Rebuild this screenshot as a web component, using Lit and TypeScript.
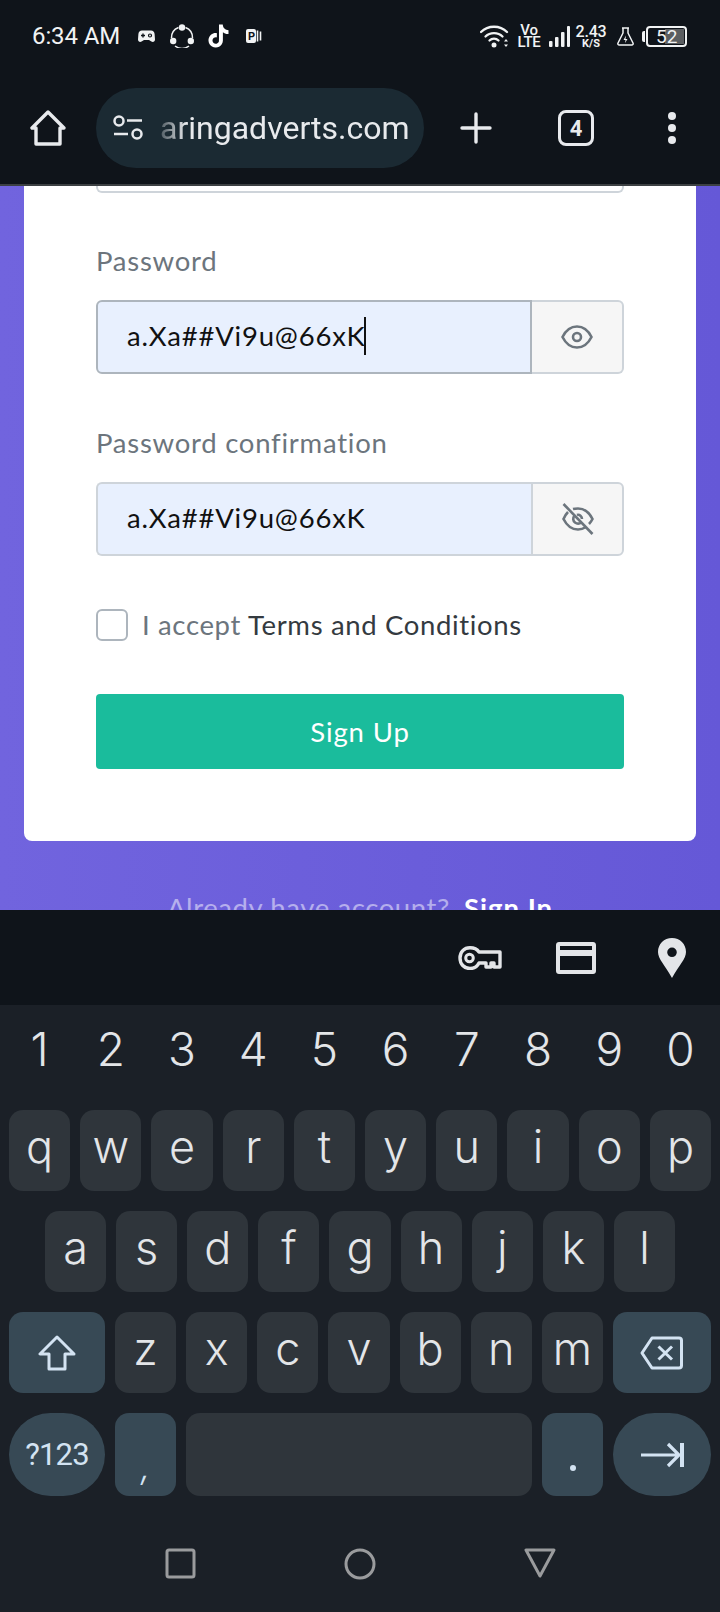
import { LitElement, html, css } from "lit";
import { customElement } from "lit/decorators.js";

const eye = html`<svg class="eye" viewBox="0 0 32 24"><path d="M1.500 12C5 5 10 1.500 16 1.500S27 5 30.500 12C27 19 22 22.500 16 22.500S5 19 1.500 12Z"/><circle cx="16" cy="12" r="4"/></svg>`;
const eyeOff = html`<svg class="eye off" viewBox="0 0 32 32"><path d="M6 9C4 11 2.800 13 1.500 16C5 23 10 26.500 16 26.500C19 26.500 21.500 25.600 24 24M11 6C12.800 5.500 14.300 5.500 16 5.500C22 5.500 27 9 30.500 16C29.500 18 28.500 19.500 27 21"/><path d="M1.500 1L30.500 31"/><path d="M12.500 12.500C10.500 15 11 18 13 19.500C15 21 17.500 20.800 19.500 19.500M15 12C17.500 11 20 13.500 20 16"/></svg>`;

@customElement("app-root")
export class AppRoot extends LitElement {
  static styles = css`
    :host { display: block; width: 720px; height: 1612px; overflow: hidden; background: #0f141a; font-family: "Roboto", sans-serif; }
    * { box-sizing: border-box; }
    svg { display: block; flex: none; }
    .status { height: 72px; display: flex; align-items: center; justify-content: space-between; padding: 0 33px 0 32px; color: #f1f3f4; }
    .status-group { display: flex; align-items: center; }
    .time { width: 86px; font-size: 24px; white-space: nowrap; margin-right: 20px; letter-spacing: -0.1px; }
    .mi-game { margin-right: 15px; }
    .mi-share { margin-right: 13px; }
    .mi-tiktok { margin-right: 16px; }
    .si-wifi, .si-volte { margin-right: 10px; }
    .si-signal { margin-right: 7px; }
    .si-speed { margin-right: 12px; }
    .si-flask { margin-right: 8px; }
    .volte { width: 20px; display: flex; flex-direction: column; align-items: center; font-size: 15px; line-height: 12px; font-weight: 500; letter-spacing: -0.3px; }
    .speed { width: 28px; display: flex; flex-direction: column; align-items: center; }
    .speed b { font-size: 16px; line-height: 14px; font-weight: 500; letter-spacing: -0.2px; }
    .speed i { font-style: normal; font-size: 11px; line-height: 9px; font-weight: 700; }
    .battery-wrap { display: flex; align-items: center; gap: 1px; }
    .nub { width: 3px; height: 11px; background: #f1f3f4; border-radius: 2px 0 0 2px; }
    .battery { position: relative; width: 41px; height: 21px; border: 2px solid #f1f3f4; border-radius: 4px; display: flex; align-items: center; padding-left: 8px; font-size: 19px; line-height: 17px; }
    .battery::before { content: ""; position: absolute; left: 17px; right: 1px; top: 1px; bottom: 1px; background: #5b5e61; }
    .battery span { position: relative; }

    .toolbar { height: 112px; display: flex; align-items: center; padding-left: 30px; }
    .home { margin-right: 30px; }
    .pill { width: 328px; height: 80px; border-radius: 40px; background: #1b2a33; display: flex; align-items: center; padding-left: 17px; margin-right: 36px; }
    .url { margin-left: 17px; width: 252px; overflow: hidden; font-size: 32px; line-height: 40px; color: #e8eaed; white-space: nowrap; -webkit-mask-image: linear-gradient(to right, rgba(0,0,0,0.25), #000 26px); mask-image: linear-gradient(to right, rgba(0,0,0,0.25), #000 26px); }
    .plus { margin-right: 66px; }
    .tabs { width: 36px; height: 36px; border: 3.500px solid #e8eaed; border-radius: 8px; display: flex; align-items: center; justify-content: center; font-size: 22px; font-weight: 700; color: #e8eaed; margin-right: 74px; }
    .divider { height: 2px; background: #3c4043; }

    .web { height: 724px; overflow: hidden; background: linear-gradient(to right, #7164de, #6558d7); font-family: "Lato", sans-serif; font-size: 27.500px; line-height: 38px; }
    .card { margin: 0 24px; background: #fff; border-radius: 0 0 8px 8px; padding: 0 72px 72px; }
    .remnant { height: 7px; border: 2px solid #ced4da; border-top: 0; border-radius: 0 0 6px 6px; margin-bottom: 50px; }
    .label { color: #6c757d; margin-top: -1px; margin-bottom: 20px; letter-spacing: 0.75px; }
    .group { display: flex; height: 74px; margin-bottom: 51px; }
    .group.last { margin-bottom: 53px; }
    .field { flex: 1; background: #e8f0fe; border: 2px solid #ced4da; border-right: 0; border-radius: 6px 0 0 6px; padding-left: 29px; padding-bottom: 3px; display: flex; align-items: center; color: #111; letter-spacing: 0.8px; }
    .focus .field { border: 2px solid #adb5bd; }
    .caret { width: 2px; height: 38px; background: #111; margin-left: -2px; }
    .addon { width: 92px; background: #f6f6f6; border: 2px solid #ced4da; border-left: 2px solid #ced4da; border-radius: 0 6px 6px 0; display: flex; align-items: center; justify-content: center; }
    .focus .addon { border-left: 0; }
    .group:not(.focus) .addon { width: 93px; }
    .eye { width: 32px; height: 24px; fill: none; stroke: #6c757d; stroke-width: 2.600; }
    .eye.off { height: 32px; stroke-width: 2.600px; }
    .accept { display: flex; align-items: center; margin-bottom: 53px; height: 32px; color: #6c757d; letter-spacing: 0.65px; }
    .check { width: 32px; height: 32px; border: 2px solid #adb5bd; border-radius: 6px; margin-right: 14px; }
    .accept b { font-weight: 400; color: #343a40; margin-left: 7px; }
    .signup { height: 75px; background: #1abc9c; border-radius: 4px; color: #fff; display: flex; align-items: center; justify-content: center; letter-spacing: 0.9px; }
    .already { margin-top: 48px; text-align: center; color: rgba(255,255,255,0.5); letter-spacing: 0.6px; }
    .already b { color: #fff; margin-left: 14px; font-weight: 700; letter-spacing: 1px; }

    .accessory { height: 95px; display: flex; align-items: center; justify-content: flex-end; padding-right: 34px; }
    .ac-key { margin-right: 54px; }
    .ac-card { margin-right: 62px; }

    .keyboard { height: 607px; background: #1b2027; padding: 0 9px; color: #e3e5e8; font-family: "Inter", "Roboto", sans-serif; }
    .nums { height: 88px; margin-bottom: 17px; display: flex; gap: 10px; align-items: center; font-size: 46px; font-weight: 350; }
    .nums span { flex: 1 1 0; text-align: center; line-height: 1; }
    .row { display: flex; gap: 10px; height: 81px; margin-bottom: 20px; }
    .row.inset { padding: 0 36px; }
    .row.bottom { height: 83px; margin-bottom: 0; }
    .key { flex: 1 1 0; border-radius: 14px; background: #2f353b; display: flex; align-items: center; justify-content: center; font-size: 45px; font-weight: 350; line-height: 1; padding-bottom: 8px; }
    .key.special { background: #374955; color: #d3e3f2; padding-bottom: 0; }
    .key.shift { flex: 0 0 96px; }
    .key.del { flex: 0 0 98px; }
    .key.pad { flex: 0 0 61px; }
    .key.round { flex: 0 0 96px; border-radius: 42px; font-family: "Roboto", sans-serif; font-size: 31px; font-weight: 400; letter-spacing: -0.8px; }
    .key.round.enter { flex: 0 0 98px; }
    .key.comma { font-size: 36px; padding-top: 22px; font-style: italic; }
    .dot { margin-top: 26px; }
    .nav { height: 116px; display: flex; justify-content: space-between; align-items: center; padding: 20px 155px 0; }
    .nav svg { width: 32px; height: 32px; fill: none; stroke: #9a9b9d; stroke-width: 3; stroke-linejoin: round; }
  `;

  private letters(s: string) {
    return [...s].map((c) => html`<div class="key">${c}</div>`);
  }

  render() {
    return html`
      <div class="status">
        <div class="status-group">
          <span class="time">6:34 AM</span>
          <svg class="mi-game" width="17" height="13" viewBox="0 0 17 13"><path fill="#f1f3f4" d="M4 .5h9c2.200 0 3.300 1.500 3.600 3.500l.4 5.500c0 2-2 3.200-3.600 2L11 10H6L3.600 11.500C2 12.700 0 11.500 0 9.500L.4 4C.7 2 1.800.5 4 .5Z"/><path stroke="#0f141a" stroke-width="1.400" d="M3 5.500h4M5 3.500v4"/><circle cx="12" cy="5.500" r="1.500" fill="none" stroke="#0f141a" stroke-width="1.200"/></svg>
          <svg class="mi-share" width="24" height="24" viewBox="0 0 24 24"><g fill="none" stroke="#f1f3f4" stroke-width="1.500"><path d="M8.500 3.500A11 11 0 0 0 1.500 14"/><path d="M15.500 3.500A11 11 0 0 1 22.500 14"/><path d="M5 22A12 12 0 0 0 19 22"/></g><g fill="#f1f3f4"><circle cx="12" cy="3.500" r="3.200"/><circle cx="3.200" cy="17" r="3.200"/><circle cx="20.800" cy="17" r="3.200"/></g></svg>
          <svg class="mi-tiktok" width="23" height="24" viewBox="0 0 24 24"><path fill="#fff" d="M12.525.02c1.310-.02 2.610-.01 3.910-.02.08 1.530.63 3.090 1.750 4.170 1.120 1.110 2.700 1.620 4.240 1.790v4.030c-1.440-.05-2.890-.35-4.200-.97-.57-.26-1.100-.59-1.620-.93-.01 2.920.01 5.840-.02 8.750-.08 1.400-.54 2.790-1.350 3.940-1.310 1.920-3.580 3.170-5.910 3.210-1.430.08-2.860-.31-4.080-1.030-2.020-1.190-3.440-3.370-3.650-5.710-.02-.5-.03-1-.01-1.490.18-1.900 1.120-3.720 2.580-4.960 1.660-1.440 3.980-2.130 6.150-1.720.02 1.480-.04 2.960-.04 4.440-.99-.32-2.150-.23-3.020.37-.63.41-1.110 1.040-1.360 1.750-.21.51-.15 1.070-.14 1.610.24 1.640 1.820 3.020 3.500 2.870 1.120-.01 2.190-.66 2.770-1.610.19-.33.4-.67.41-1.060.1-1.790.06-3.570.07-5.360.01-4.030-.01-8.050.02-12.070z"/></svg>
          <svg width="16" height="14" viewBox="0 0 16 14"><rect x="0" y="0" width="10" height="14" rx="2" fill="#f1f3f4"/><text x="2" y="11" font-size="11" font-weight="700" font-family="Roboto" fill="#0f141a">P</text><path d="M11.500 1.500v11M14.500 2.500v9" stroke="#f1f3f4" stroke-width="1.600"/></svg>
        </div>
        <div class="status-group">
          <svg class="si-wifi" width="29" height="24" viewBox="0 0 29 24"><g fill="none" stroke="#f1f3f4" stroke-width="2.300" stroke-linecap="round"><path d="M1 8C8 1 20 1 27 8"/><path d="M5.500 12.500C10 8 18 8 22.500 12.500"/><path d="M9.500 16.500C12 14 16 14 18.500 16.500"/></g><circle cx="14" cy="21" r="2.500" fill="#f1f3f4"/><path fill="#f1f3f4" d="M26 15l2 2.500h-4zM26 23l-2-2.500h4z"/></svg>
          <div class="si-volte volte"><span>Vo</span><span>LTE</span></div>
          <svg class="si-signal" width="21" height="21" viewBox="0 0 21 21"><g fill="#f1f3f4"><rect x="0" y="15" width="3.500" height="6" rx="1"/><rect x="6" y="11" width="3.500" height="10" rx="1"/><rect x="12" y="6" width="3.500" height="15" rx="1"/><rect x="18" y="0" width="3" height="21" rx="1"/></g></svg>
          <div class="si-speed speed"><b>2.43</b><i>K/S</i></div>
          <svg class="si-flask" width="17" height="19" viewBox="0 0 17 19"><path fill="none" stroke="#f1f3f4" stroke-width="1.500" stroke-linejoin="round" d="M5 1h7M6 1v5L1 16c-.5 1 .2 2 1.200 2h12.600c1 0 1.700-1 1.200-2L11 6V1"/><path fill="#f1f3f4" d="M9 8.500L6.500 13h2l-.5 3L10.500 12h-2z"/></svg>
          <div class="battery-wrap"><div class="nub"></div><div class="battery"><span>52</span></div></div>
        </div>
      </div>

      <div class="toolbar">
        <svg class="home" width="36" height="36" viewBox="0 0 36 36"><path fill="none" stroke="#e8eaed" stroke-width="3.400" stroke-linejoin="round" d="M18 2L2 18H6V34H30V18H34Z"/></svg>
        <div class="pill">
          <svg width="30" height="26" viewBox="0 0 30 26"><g fill="none" stroke="#e8eaed" stroke-width="2.500"><circle cx="6" cy="6" r="4.500"/><path d="M14 5.500H29"/><path d="M1 19H15"/><circle cx="24" cy="19" r="4.500"/></g></svg>
          <div class="url">aringadverts.com</div>
        </div>
        <svg class="plus" width="32" height="32" viewBox="0 0 32 32"><path stroke="#e8eaed" stroke-width="3.400" stroke-linecap="round" d="M16 2V30M2 16H30"/></svg>
        <div class="tabs">4</div>
        <svg width="8" height="32" viewBox="0 0 8 32"><g fill="#e8eaed"><circle cx="4" cy="4" r="4"/><circle cx="4" cy="16" r="4"/><circle cx="4" cy="28" r="4"/></g></svg>
      </div>
      <div class="divider"></div>

      <div class="web">
        <div class="card">
          <div class="remnant"></div>
          <div class="label">Password</div>
          <div class="group focus">
            <div class="field">a.Xa##Vi9u@66xK<span class="caret"></span></div>
            <div class="addon">${eye}</div>
          </div>
          <div class="label">Password confirmation</div>
          <div class="group last">
            <div class="field">a.Xa##Vi9u@66xK</div>
            <div class="addon">${eyeOff}</div>
          </div>
          <div class="accept"><span class="check"></span>I accept<b>Terms and Conditions</b></div>
          <div class="signup">Sign Up</div>
        </div>
        <div class="already">Already have account?<b>Sign In</b></div>
      </div>

      <div class="accessory">
        <svg class="ac-key" width="44" height="24" viewBox="0 0 44 24"><path fill="none" stroke="#e3e5e8" stroke-width="3.400" stroke-linejoin="round" d="M21 6H42V21H36V17H33V21H28V17H21C19 21 16 22.500 12 22.500C6 22.500 2 18 2 12S6 1.800 12 1.800C16 1.800 19 3 21 6Z"/><circle cx="11.500" cy="12" r="3.800" fill="none" stroke="#e3e5e8" stroke-width="3"/></svg>
        <svg class="ac-card" width="40" height="32" viewBox="0 0 40 32"><path fill="#e3e5e8" fill-rule="evenodd" d="M3 0H37C38.700 0 40 1.300 40 3V29C40 30.700 38.700 32 37 32H3C1.300 32 0 30.700 0 29V3C0 1.300 1.300 0 3 0ZM4 4V8H36V4ZM4 14V28H36V14Z"/></svg>
        <svg width="28" height="40" viewBox="0 0 28 40"><path fill="#e3e5e8" fill-rule="evenodd" d="M14 0C22 0 28 6 28 14C28 21 21 27 14 40C7 27 0 21 0 14C0 6 6 0 14 0ZM14 9.500A4.800 4.800 0 1 0 14 19.100A4.800 4.800 0 1 0 14 9.500Z"/></svg>
      </div>

      <div class="keyboard">
        <div class="nums">${[..."1234567890"].map((d) => html`<span>${d}</span>`)}</div>
        <div class="row">${this.letters("qwertyuiop")}</div>
        <div class="row inset">${this.letters("asdfghjkl")}</div>
        <div class="row">
          <div class="key special shift"><svg width="38" height="36" viewBox="0 0 38 36"><path fill="none" stroke="#d3e3f2" stroke-width="3" stroke-linejoin="round" d="M19 2L2 19H11V34H27V19H36Z"/></svg></div>
          ${this.letters("zxcvbnm")}
          <div class="key special del"><svg width="43" height="34" viewBox="0 0 43 34"><path fill="none" stroke="#d3e3f2" stroke-width="3" stroke-linejoin="round" d="M12 2H39C40.500 2 41.500 3 41.500 4.500V29.500C41.500 31 40.500 32 39 32H12L2 17Z"/><path fill="none" stroke="#d3e3f2" stroke-width="3" d="M18.500 10.500L32 23.500M32 10.500L18.500 23.500"/></svg></div>
        </div>
        <div class="row bottom">
          <div class="key special round">?123</div>
          <div class="key special pad comma">,</div>
          <div class="key"></div>
          <div class="key special pad"><svg class="dot" width="6" height="6" viewBox="0 0 6 6"><circle cx="3" cy="3" r="3" fill="#d3e3f2"/></svg></div>
          <div class="key special round enter"><svg width="44" height="26" viewBox="0 0 44 26"><path fill="none" stroke="#d3e3f2" stroke-width="3.200" d="M1 13H39M28 2L39 13L28 24"/><path stroke="#d3e3f2" stroke-width="4" d="M42 1V25"/></svg></div>
        </div>
        <div class="nav">
          <svg viewBox="0 0 32 32"><rect x="3" y="2" width="27" height="27" rx="2"/></svg>
          <svg viewBox="0 0 32 32"><circle cx="16" cy="16" r="14"/></svg>
          <svg viewBox="0 0 32 32"><path d="M2 2H30L16 28Z"/></svg>
        </div>
      </div>
    `;
  }
}
